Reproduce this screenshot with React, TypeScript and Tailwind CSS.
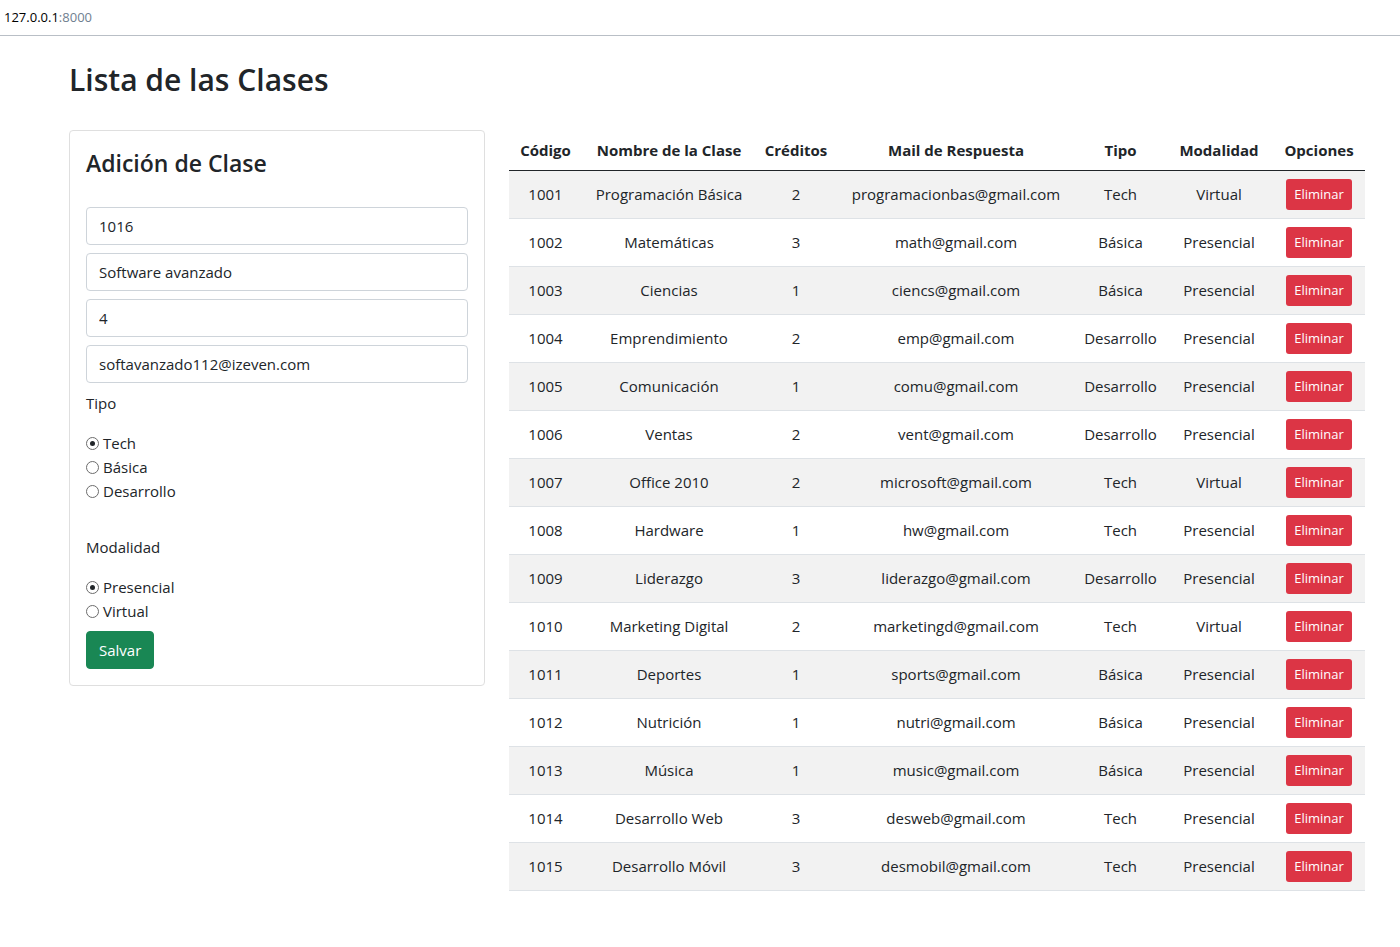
import { useState } from "react";

type Clase = {
  codigo: string;
  nombre: string;
  creditos: number;
  mail: string;
  tipo: string;
  modalidad: string;
};

const CLASES: Clase[] = [
  { codigo: "1001", nombre: "Programación Básica", creditos: 2, mail: "programacionbas@gmail.com", tipo: "Tech", modalidad: "Virtual" },
  { codigo: "1002", nombre: "Matemáticas", creditos: 3, mail: "math@gmail.com", tipo: "Básica", modalidad: "Presencial" },
  { codigo: "1003", nombre: "Ciencias", creditos: 1, mail: "ciencs@gmail.com", tipo: "Básica", modalidad: "Presencial" },
  { codigo: "1004", nombre: "Emprendimiento", creditos: 2, mail: "emp@gmail.com", tipo: "Desarrollo", modalidad: "Presencial" },
  { codigo: "1005", nombre: "Comunicación", creditos: 1, mail: "comu@gmail.com", tipo: "Desarrollo", modalidad: "Presencial" },
  { codigo: "1006", nombre: "Ventas", creditos: 2, mail: "vent@gmail.com", tipo: "Desarrollo", modalidad: "Presencial" },
  { codigo: "1007", nombre: "Office 2010", creditos: 2, mail: "microsoft@gmail.com", tipo: "Tech", modalidad: "Virtual" },
  { codigo: "1008", nombre: "Hardware", creditos: 1, mail: "hw@gmail.com", tipo: "Tech", modalidad: "Presencial" },
  { codigo: "1009", nombre: "Liderazgo", creditos: 3, mail: "liderazgo@gmail.com", tipo: "Desarrollo", modalidad: "Presencial" },
  { codigo: "1010", nombre: "Marketing Digital", creditos: 2, mail: "marketingd@gmail.com", tipo: "Tech", modalidad: "Virtual" },
  { codigo: "1011", nombre: "Deportes", creditos: 1, mail: "sports@gmail.com", tipo: "Básica", modalidad: "Presencial" },
  { codigo: "1012", nombre: "Nutrición", creditos: 1, mail: "nutri@gmail.com", tipo: "Básica", modalidad: "Presencial" },
  { codigo: "1013", nombre: "Música", creditos: 1, mail: "music@gmail.com", tipo: "Básica", modalidad: "Presencial" },
  { codigo: "1014", nombre: "Desarrollo Web", creditos: 3, mail: "desweb@gmail.com", tipo: "Tech", modalidad: "Presencial" },
  { codigo: "1015", nombre: "Desarrollo Móvil", creditos: 3, mail: "desmobil@gmail.com", tipo: "Tech", modalidad: "Presencial" },
];

const HEADERS = ["Código", "Nombre de la Clase", "Créditos", "Mail de Respuesta", "Tipo", "Modalidad", "Opciones"];

function Field({ label, type = "text", value }: { label: string; type?: string; value: string }) {
  return (
    <input
      type={type}
      aria-label={label}
      defaultValue={value}
      className="block h-[38px] w-full rounded border border-[#ced4da] bg-white px-3 text-[15px] text-[#212529]"
    />
  );
}

function RadioGroup({ name, options }: { name: string; options: string[] }) {
  const [selected, setSelected] = useState(options[0]);
  return (
    <fieldset>
      <legend className="mb-4 leading-6">{name}</legend>
      {options.map((option) => (
        <label key={option} className="flex h-6 items-center gap-1">
          <input
            type="radio"
            name={name}
            checked={selected === option}
            onChange={() => setSelected(option)}
            className="grid size-[13px] shrink-0 appearance-none place-items-center rounded-full border border-[#6c6c6c] bg-white before:size-[5px] before:rounded-full checked:before:bg-[#212529]"
          />
          {option}
        </label>
      ))}
    </fieldset>
  );
}

export default function App() {
  const [clases, setClases] = useState(CLASES);

  return (
    <div className="bg-white font-['Open_Sans','Noto_Sans',sans-serif] text-[15px] font-normal leading-6 text-[#212529]">
      <header className="flex h-9 items-center border-b border-[#b9bfc6] px-1 pb-0.5 text-[13px] text-black">
        127.0.0.1<span className="text-[#708090]">:8000</span>
      </header>

      <main className="pt-6 pr-[35px] pb-14 pl-[69px]">
        <h1 className="mb-[30px] text-[30px] leading-10 font-semibold">Lista de las Clases</h1>

        <div className="grid grid-cols-3 items-start gap-6">
          <section className="rounded border border-[#dfdfdf] p-4">
            <h2 className="mb-7 text-[23px] leading-8 font-semibold">Adición de Clase</h2>
            <form onSubmit={(event) => event.preventDefault()}>
              <div className="mb-2 flex flex-col gap-2">
                <Field label="Código" value="1016" />
                <Field label="Nombre" value="Software avanzado" />
                <Field label="Créditos" value="4" />
                <Field label="Mail de Respuesta" type="email" value="softavanzado112@izeven.com" />
              </div>
              <div className="flex flex-col gap-8">
                <RadioGroup name="Tipo" options={["Tech", "Básica", "Desarrollo"]} />
                <RadioGroup name="Modalidad" options={["Presencial", "Virtual"]} />
              </div>
              <button type="submit" className="mt-2 block h-[38px] rounded border border-[#198754] bg-[#198754] px-3 text-white">
                Salvar
              </button>
            </form>
          </section>

          <table className="col-span-2 w-full table-fixed border-collapse text-center">
            <colgroup>
              <col className="w-[73px]" />
              <col className="w-[174px]" />
              <col className="w-[80px]" />
              <col className="w-[240px]" />
              <col className="w-[89px]" />
              <col className="w-[108px]" />
              <col className="w-[92px]" />
            </colgroup>
            <thead>
              <tr className="h-10 border-b border-[#212529]">
                {HEADERS.map((header) => (
                  <th key={header} scope="col" className="font-bold whitespace-nowrap">
                    {header}
                  </th>
                ))}
              </tr>
            </thead>
            <tbody>
              {clases.map((clase) => (
                <tr key={clase.codigo} className="h-12 border-b border-[#dee2e6] odd:bg-[#f2f2f2]">
                  <td>{clase.codigo}</td>
                  <td>{clase.nombre}</td>
                  <td>{clase.creditos}</td>
                  <td>{clase.mail}</td>
                  <td>{clase.tipo}</td>
                  <td>{clase.modalidad}</td>
                  <td>
                    <button
                      type="button"
                      onClick={() => setClases(clases.filter((item) => item.codigo !== clase.codigo))}
                      className="inline-block h-[31px] rounded-[3px] bg-[#dc3545] px-2 align-middle text-[13px] text-white"
                    >
                      Eliminar
                    </button>
                  </td>
                </tr>
              ))}
            </tbody>
          </table>
        </div>
      </main>
    </div>
  );
}
